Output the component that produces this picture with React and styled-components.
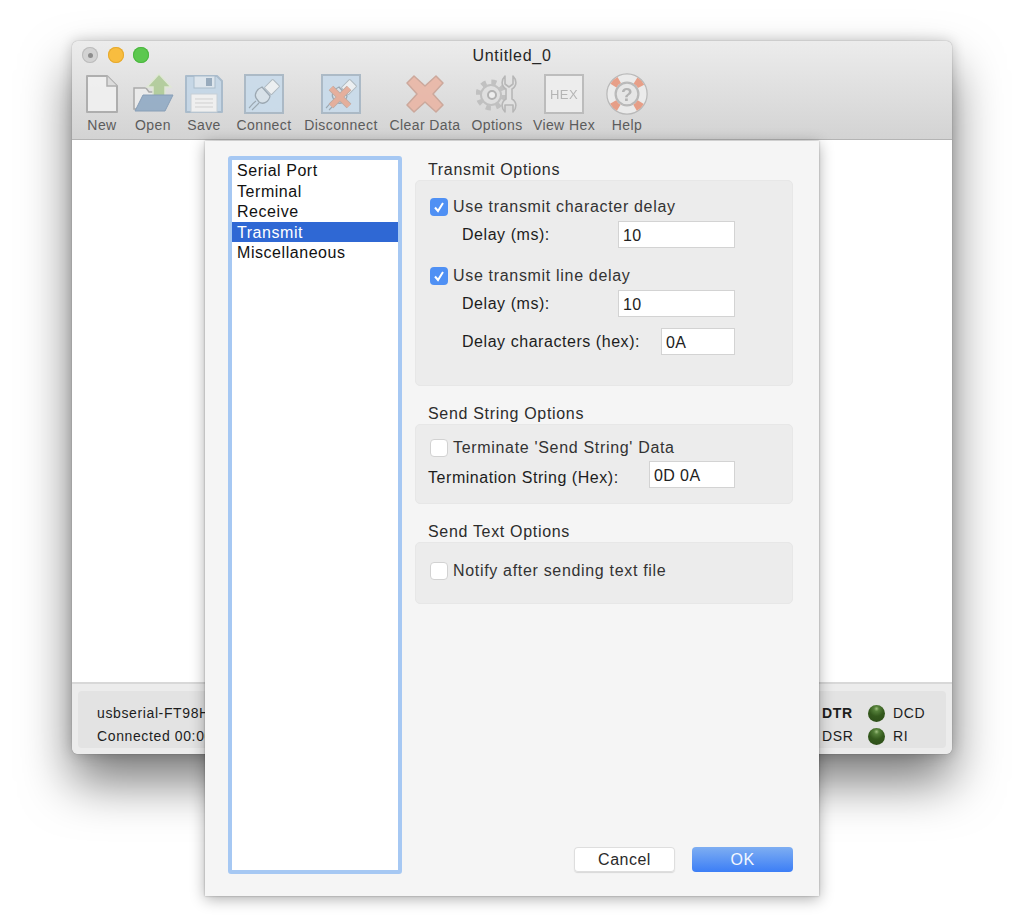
import React from "react";
import styled, { createGlobalStyle } from "styled-components";

const GlobalStyle = createGlobalStyle`
  html, body {
    margin: 0;
    background: #fff;
    font-family: "Liberation Sans", Arial, sans-serif;
  }
`;

// ======================
// Main window
// ======================
const Stage = styled.div`
  width: 1024px;
  height: 924px;
  padding: 41px 0 0 72px;
  box-sizing: border-box;
  overflow: hidden;
`;

const Win = styled.div`
  position: relative;
  width: 880px;
  height: 713px;
  display: flex;
  flex-direction: column;
  border-radius: 6px;
  background: #ececec;
  box-shadow: 0 28px 50px rgba(0, 0, 0, 0.52), 0 0 14px rgba(0, 0, 0, 0.2), 0 0 1px rgba(0, 0, 0, 0.5);
`;

const Header = styled.div`
  height: 99px;
  box-sizing: border-box;
  flex: none;
  border-radius: 6px 6px 0 0;
  border-bottom: 1px solid #b4b4b4;
  background: linear-gradient(#ececec, #d3d3d3);
`;

const TitleBar = styled.div`
  position: relative;
  height: 29px;
  display: flex;
  align-items: center;
  justify-content: center;
  padding-top: 1px;
  box-sizing: border-box;
  font-size: 16px;
  letter-spacing: 0.7px;
  color: #262626;
`;

const Lights = styled.div`
  position: absolute;
  left: 10px;
  top: 6px;
  display: flex;
  gap: 9.5px;
`;

const Light = styled.span`
  width: 16px;
  height: 16px;
  border-radius: 50%;
  display: flex;
  align-items: center;
  justify-content: center;
  background: ${(p) => p.$color};
  box-shadow: inset 0 0 0 1px ${(p) => p.$ring};
`;

const LightDot = styled.span`
  width: 5px;
  height: 5px;
  border-radius: 50%;
  background: #8d8d8d;
`;

const Toolbar = styled.div`
  display: flex;
  padding: 3px 0 0 8px;
`;

const ToolItem = styled.div`
  width: ${(p) => p.$w}px;
  display: flex;
  flex-direction: column;
  align-items: center;
  gap: 2px;
  font-size: 14px;
  letter-spacing: 0.42px;
  color: #5c5c5c;
  white-space: nowrap;
`;

const ToolIcon = styled.svg`
  width: 42px;
  height: 42px;
  display: block;
  opacity: 0.88;
  filter: blur(0.4px);
`;

const Content = styled.div`
  flex: 1;
  background: #fff;
  border-bottom: 2px solid #d8d8d8;
`;

const StatusArea = styled.div`
  height: 70px;
  flex: none;
  box-sizing: border-box;
  padding: 7px 6px 6px 6px;
  border-radius: 0 0 6px 6px;
  background: #ececec;
`;

const StatusPanel = styled.div`
  height: 100%;
  box-sizing: border-box;
  padding: 10px 22px 0 19px;
  display: flex;
  align-items: center;
  justify-content: space-between;
  background: #e3e3e3;
  border-radius: 4px;
  font-size: 14px;
  letter-spacing: 0.62px;
  color: #1d1d1d;
`;

const StatusText = styled.div`
  display: grid;
  grid-auto-rows: 23px;
  align-items: center;
`;

const Signals = styled.div`
  display: grid;
  grid-template-columns: 29px auto 31px;
  grid-auto-rows: 23px;
  align-items: center;
`;

const SignalName = styled.span`
  font-weight: ${(p) => (p.$on ? 700 : 400)};
`;

const Led = styled.span`
  width: 17px;
  height: 17px;
  margin: 0 8px 0 17px;
  border-radius: 50%;
  background: radial-gradient(circle at 50% 22%, #9fc07f 0, #55803a 16%, #34591d 48%, #2b4a17 100%);
`;

// ======================
// Settings dialog
// ======================
const Dialog = styled.div`
  position: absolute;
  left: 133px;
  top: 100px;
  width: 614px;
  height: 755px;
  box-sizing: border-box;
  padding: 15px 26px 22px 23px;
  display: flex;
  gap: 13px;
  background: #f5f5f5;
  box-shadow: 0 3px 14px rgba(0, 0, 0, 0.32), 0 0 2px rgba(0, 0, 0, 0.3);
`;

const CategoryList = styled.div`
  width: 174px;
  flex: none;
  box-sizing: border-box;
  background: #fff;
  border: 4px solid #a6c8f3;
  border-radius: 3px;
`;

const Category = styled.div`
  height: 20.5px;
  line-height: 22.5px;
  padding-left: 5px;
  font-size: 16px;
  letter-spacing: 0.55px;
  color: ${(p) => (p.$selected ? "#fff" : "#111")};
  background: ${(p) => (p.$selected ? "#2f68d4" : "transparent")};
`;

const Pane = styled.div`
  flex: 1;
  display: flex;
  flex-direction: column;
  padding: 2px 0 2px;
`;

const SectionTitle = styled.div`
  height: 22px;
  line-height: 24px;
  padding-left: 13px;
  font-size: 16px;
  letter-spacing: 0.68px;
  color: #2c2c2c;
`;

const Group = styled.div`
  height: ${(p) => p.$height}px;
  flex: none;
  box-sizing: border-box;
  padding: ${(p) => p.$top}px 57px 0 14px;
  margin-bottom: 16px;
  background: #ececec;
  border: 1px solid #e7e7e7;
  border-radius: 5px;
`;

const CheckRow = styled.div`
  height: 18px;
  display: flex;
  align-items: center;
  gap: 5px;
  margin-top: ${(p) => p.$top || 0}px;
  font-size: 16px;
  letter-spacing: 0.68px;
  color: #333;
`;

const CheckBox = styled.span`
  width: 18px;
  height: 18px;
  flex: none;
  box-sizing: border-box;
  display: flex;
  align-items: center;
  justify-content: center;
  border-radius: 4px;
  background: ${(p) => (p.$checked ? "#4f90f4" : "#fff")};
  border: ${(p) => (p.$checked ? "none" : "1px solid #d2d2d2")};
`;

const FieldRow = styled.div`
  display: flex;
  align-items: center;
  justify-content: space-between;
  margin-top: ${(p) => p.$top}px;
  margin-left: ${(p) => p.$indent}px;
  font-size: 16px;
  letter-spacing: 0.55px;
  color: #1d1d1d;
`;

const FieldLabel = styled.span`
  padding-top: ${(p) => p.$drop || 0}px;
`;

const Field = styled.div`
  width: ${(p) => p.$w}px;
  height: 27px;
  box-sizing: border-box;
  padding: 2px 0 0 4px;
  display: flex;
  align-items: center;
  background: #fff;
  border: 1px solid #d3d3d3;
  font-size: 16px;
  letter-spacing: 0.4px;
  color: #222;
`;

const Buttons = styled.div`
  margin-top: auto;
  display: flex;
  justify-content: flex-end;
  gap: 17px;
`;

const Button = styled.button`
  width: 101px;
  height: 25px;
  padding: 0;
  font-family: inherit;
  font-size: 16px;
  letter-spacing: 0.5px;
  border-radius: 4px;
  border: none;
  color: ${(p) => (p.$primary ? "#f2f7ff" : "#2a2a2a")};
  background: ${(p) => (p.$primary ? "linear-gradient(#7eaef2, #3c7ef6)" : "#fff")};
  box-shadow: ${(p) => (p.$primary ? "none" : "inset 0 0 0 1px #dedede, 0 1px 1px rgba(0,0,0,0.12)")};
`;

// ======================
// Toolbar icons
// ======================
const plug = (
  <g>
    <rect x="24" y="8" width="10" height="12" rx="1" fill="#eef2f4" stroke="#a9b4bc" transform="rotate(45 29 14)" />
    <path d="M19 14 L27 23 C26 29 20 32 16 29 L13 25 C11 21 14 16 19 14 Z" fill="#d7e2ea" stroke="#93a1ac" strokeWidth="1.3" />
    <path d="M13 28 C9 31 8 33 6 35 M16 30 C13 33 11 35 9 37" fill="none" stroke="#93a1ac" strokeWidth="1.1" />
  </g>
);

const icons = {
  new: (
    <g>
      <path d="M6 3 H26 L36 13 V39 H6 Z" fill="#f1f1f1" stroke="#a8a8a8" strokeWidth="2" strokeLinejoin="round" />
      <path d="M26 3 V13 H36" fill="#dcdcdc" stroke="#a8a8a8" strokeWidth="1.5" />
    </g>
  ),
  open: (
    <g>
      <path d="M2 15 H14 L17 19 H26 V36 H2 Z" fill="#ededed" stroke="#a3a3a3" strokeWidth="1.5" />
      <path d="M27 1 L39 14 H33 V24 H21 V14 H15 Z" fill="#aecb96" stroke="#dfe8d4" strokeWidth="1.5" />
      <path d="M11 22 H41 L33 38 H3 Z" fill="#8fa9c4" stroke="#7c96b2" strokeWidth="1" />
    </g>
  ),
  save: (
    <g>
      <path d="M3 3 H34 L39 8 V39 H3 Z" fill="#c3d6e7" stroke="#a3b7c9" strokeWidth="2" strokeLinejoin="round" />
      <rect x="11" y="3" width="21" height="12" fill="#dde6ee" stroke="#a3b7c9" />
      <rect x="23" y="5" width="6" height="8" fill="#8ea4b9" />
      <rect x="8" y="21" width="26" height="18" fill="#f2f2f2" stroke="#c4ced6" />
      <path d="M12 26 H30 M12 30 H30 M12 34 H30" stroke="#cfcfcf" strokeWidth="1" />
    </g>
  ),
  connect: (
    <g>
      <rect x="2" y="2" width="38" height="38" fill="#c8dbeb" stroke="#a5b5c3" strokeWidth="2" />
      {plug}
    </g>
  ),
  disconnect: (
    <g>
      <rect x="2" y="2" width="38" height="38" fill="#c8dbeb" stroke="#a5b5c3" strokeWidth="2" />
      {plug}
      <path d="M11 15 L29 33 M29 15 L11 33" stroke="#b8a49c" strokeWidth="6.5" />
      <path d="M11 15 L29 33 M29 15 L11 33" stroke="#e6a994" strokeWidth="5" />
    </g>
  ),
  clear: (
    <path
      d="M10 3 L21 13 L32 3 L39 10 L29 21 L39 32 L32 39 L21 29 L10 39 L3 32 L13 21 L3 10 Z"
      fill="#eab5a4"
      stroke="#c9a193"
      strokeWidth="1.5"
      strokeLinejoin="round"
    />
  ),
  options: (
    <g fill="none" stroke="#bdbdbd">
      <circle cx="15" cy="22" r="10" fill="#e0e0e0" strokeWidth="2" />
      <circle cx="15" cy="22" r="13" strokeWidth="5" strokeDasharray="5 5.2" />
      <circle cx="16" cy="22" r="4" fill="#f0f0f0" stroke="#acacac" strokeWidth="2" />
      <path d="M29 3 V11 L33 14 L37 11 V3 C41 7 41 13 36 16 V26 C41 29 41 35 37 39 V32 H29 V39 C25 35 25 29 30 26 V16 C25 13 25 7 29 3 Z" fill="#e2e2e2" stroke="#b2b2b2" strokeWidth="1.6" strokeLinejoin="round" />
    </g>
  ),
  hex: (
    <g>
      <rect x="2" y="2" width="38" height="38" fill="#efefef" stroke="#b8b8b8" strokeWidth="2" />
      <text x="21" y="25.5" textAnchor="middle" fontFamily="Liberation Sans, Arial, sans-serif" fontSize="13" fill="#b0b0b0">
        HEX
      </text>
    </g>
  ),
  help: (
    <g>
      <circle cx="21" cy="21" r="16" fill="none" stroke="#b4b4b4" strokeWidth="9.5" />
      <circle cx="21" cy="21" r="16" fill="none" stroke="#ededed" strokeWidth="7" />
      <circle cx="21" cy="21" r="16" fill="none" stroke="#e8967c" strokeWidth="7" strokeDasharray="8 17.13" strokeDashoffset="16.6" />
      <circle cx="21" cy="21" r="11" fill="#e8e8e8" stroke="#b4b4b4" strokeWidth="1.5" />
      <text x="21" y="28" textAnchor="middle" fontFamily="Liberation Sans, Arial, sans-serif" fontSize="19" fontWeight="700" fill="#aeaeae">
        ?
      </text>
    </g>
  ),
};

const tools = [
  { label: "New", icon: "new", w: 44 },
  { label: "Open", icon: "open", w: 58 },
  { label: "Save", icon: "save", w: 44 },
  { label: "Connect", icon: "connect", w: 76 },
  { label: "Disconnect", icon: "disconnect", w: 78 },
  { label: "Clear Data", icon: "clear", w: 90 },
  { label: "Options", icon: "options", w: 54 },
  { label: "View Hex", icon: "hex", w: 80 },
  { label: "Help", icon: "help", w: 46 },
];

const categories = ["Serial Port", "Terminal", "Receive", "Transmit", "Miscellaneous"];

const Check = ({ checked, label, top }) => (
  <CheckRow $top={top}>
    <CheckBox $checked={checked}>
      {checked && (
        <svg width="12" height="12" viewBox="0 0 12 12">
          <path d="M2 6.5 L5 10 L10 2" fill="none" stroke="#fff" strokeWidth="2" />
        </svg>
      )}
    </CheckBox>
    {label}
  </CheckRow>
);

export default function App() {
  return (
    <Stage>
      <GlobalStyle />
      <Win>
        <Header>
          <TitleBar>
            <Lights>
              <Light $color="#d3d3d3" $ring="#bcbcbc">
                <LightDot />
              </Light>
              <Light $color="#f8bd3f" $ring="#e5a92f" />
              <Light $color="#5cc84f" $ring="#4cb640" />
            </Lights>
            Untitled_0
          </TitleBar>
          <Toolbar>
            {tools.map((t) => (
              <ToolItem key={t.label} $w={t.w}>
                <ToolIcon viewBox="0 0 42 42">{icons[t.icon]}</ToolIcon>
                {t.label}
              </ToolItem>
            ))}
          </Toolbar>
        </Header>
        <Content />
        <StatusArea>
          <StatusPanel>
            <StatusText>
              <span>usbserial-FT98H</span>
              <span>Connected 00:00:00</span>
            </StatusText>
            <Signals>
              <SignalName $on>DTR</SignalName>
              <Led />
              <SignalName>DCD</SignalName>
              <SignalName>DSR</SignalName>
              <Led />
              <SignalName>RI</SignalName>
            </Signals>
          </StatusPanel>
        </StatusArea>

        <Dialog>
          <CategoryList>
            {categories.map((c) => (
              <Category key={c} $selected={c === "Transmit"}>
                {c}
              </Category>
            ))}
          </CategoryList>
          <Pane>
            <SectionTitle>Transmit Options</SectionTitle>
            <Group $height={206} $top={17}>
              <Check checked label="Use transmit character delay" />
              <FieldRow $top={5} $indent={32}>
                <FieldLabel>Delay (ms):</FieldLabel>
                <Field $w={117}>10</Field>
              </FieldRow>
              <Check checked label="Use transmit line delay" top={19} />
              <FieldRow $top={5} $indent={32}>
                <FieldLabel>Delay (ms):</FieldLabel>
                <Field $w={117}>10</Field>
              </FieldRow>
              <FieldRow $top={11} $indent={32}>
                <FieldLabel>Delay characters (hex):</FieldLabel>
                <Field $w={74}>0A</Field>
              </FieldRow>
            </Group>
            <SectionTitle>Send String Options</SectionTitle>
            <Group $height={80} $top={14}>
              <Check label="Terminate 'Send String' Data" />
              <FieldRow $top={4} $indent={-2}>
                <FieldLabel $drop={7}>Termination String (Hex):</FieldLabel>
                <Field $w={86}>0D 0A</Field>
              </FieldRow>
            </Group>
            <SectionTitle>Send Text Options</SectionTitle>
            <Group $height={62} $top={19}>
              <Check label="Notify after sending text file" />
            </Group>
            <Buttons>
              <Button>Cancel</Button>
              <Button $primary>OK</Button>
            </Buttons>
          </Pane>
        </Dialog>
      </Win>
    </Stage>
  );
}
